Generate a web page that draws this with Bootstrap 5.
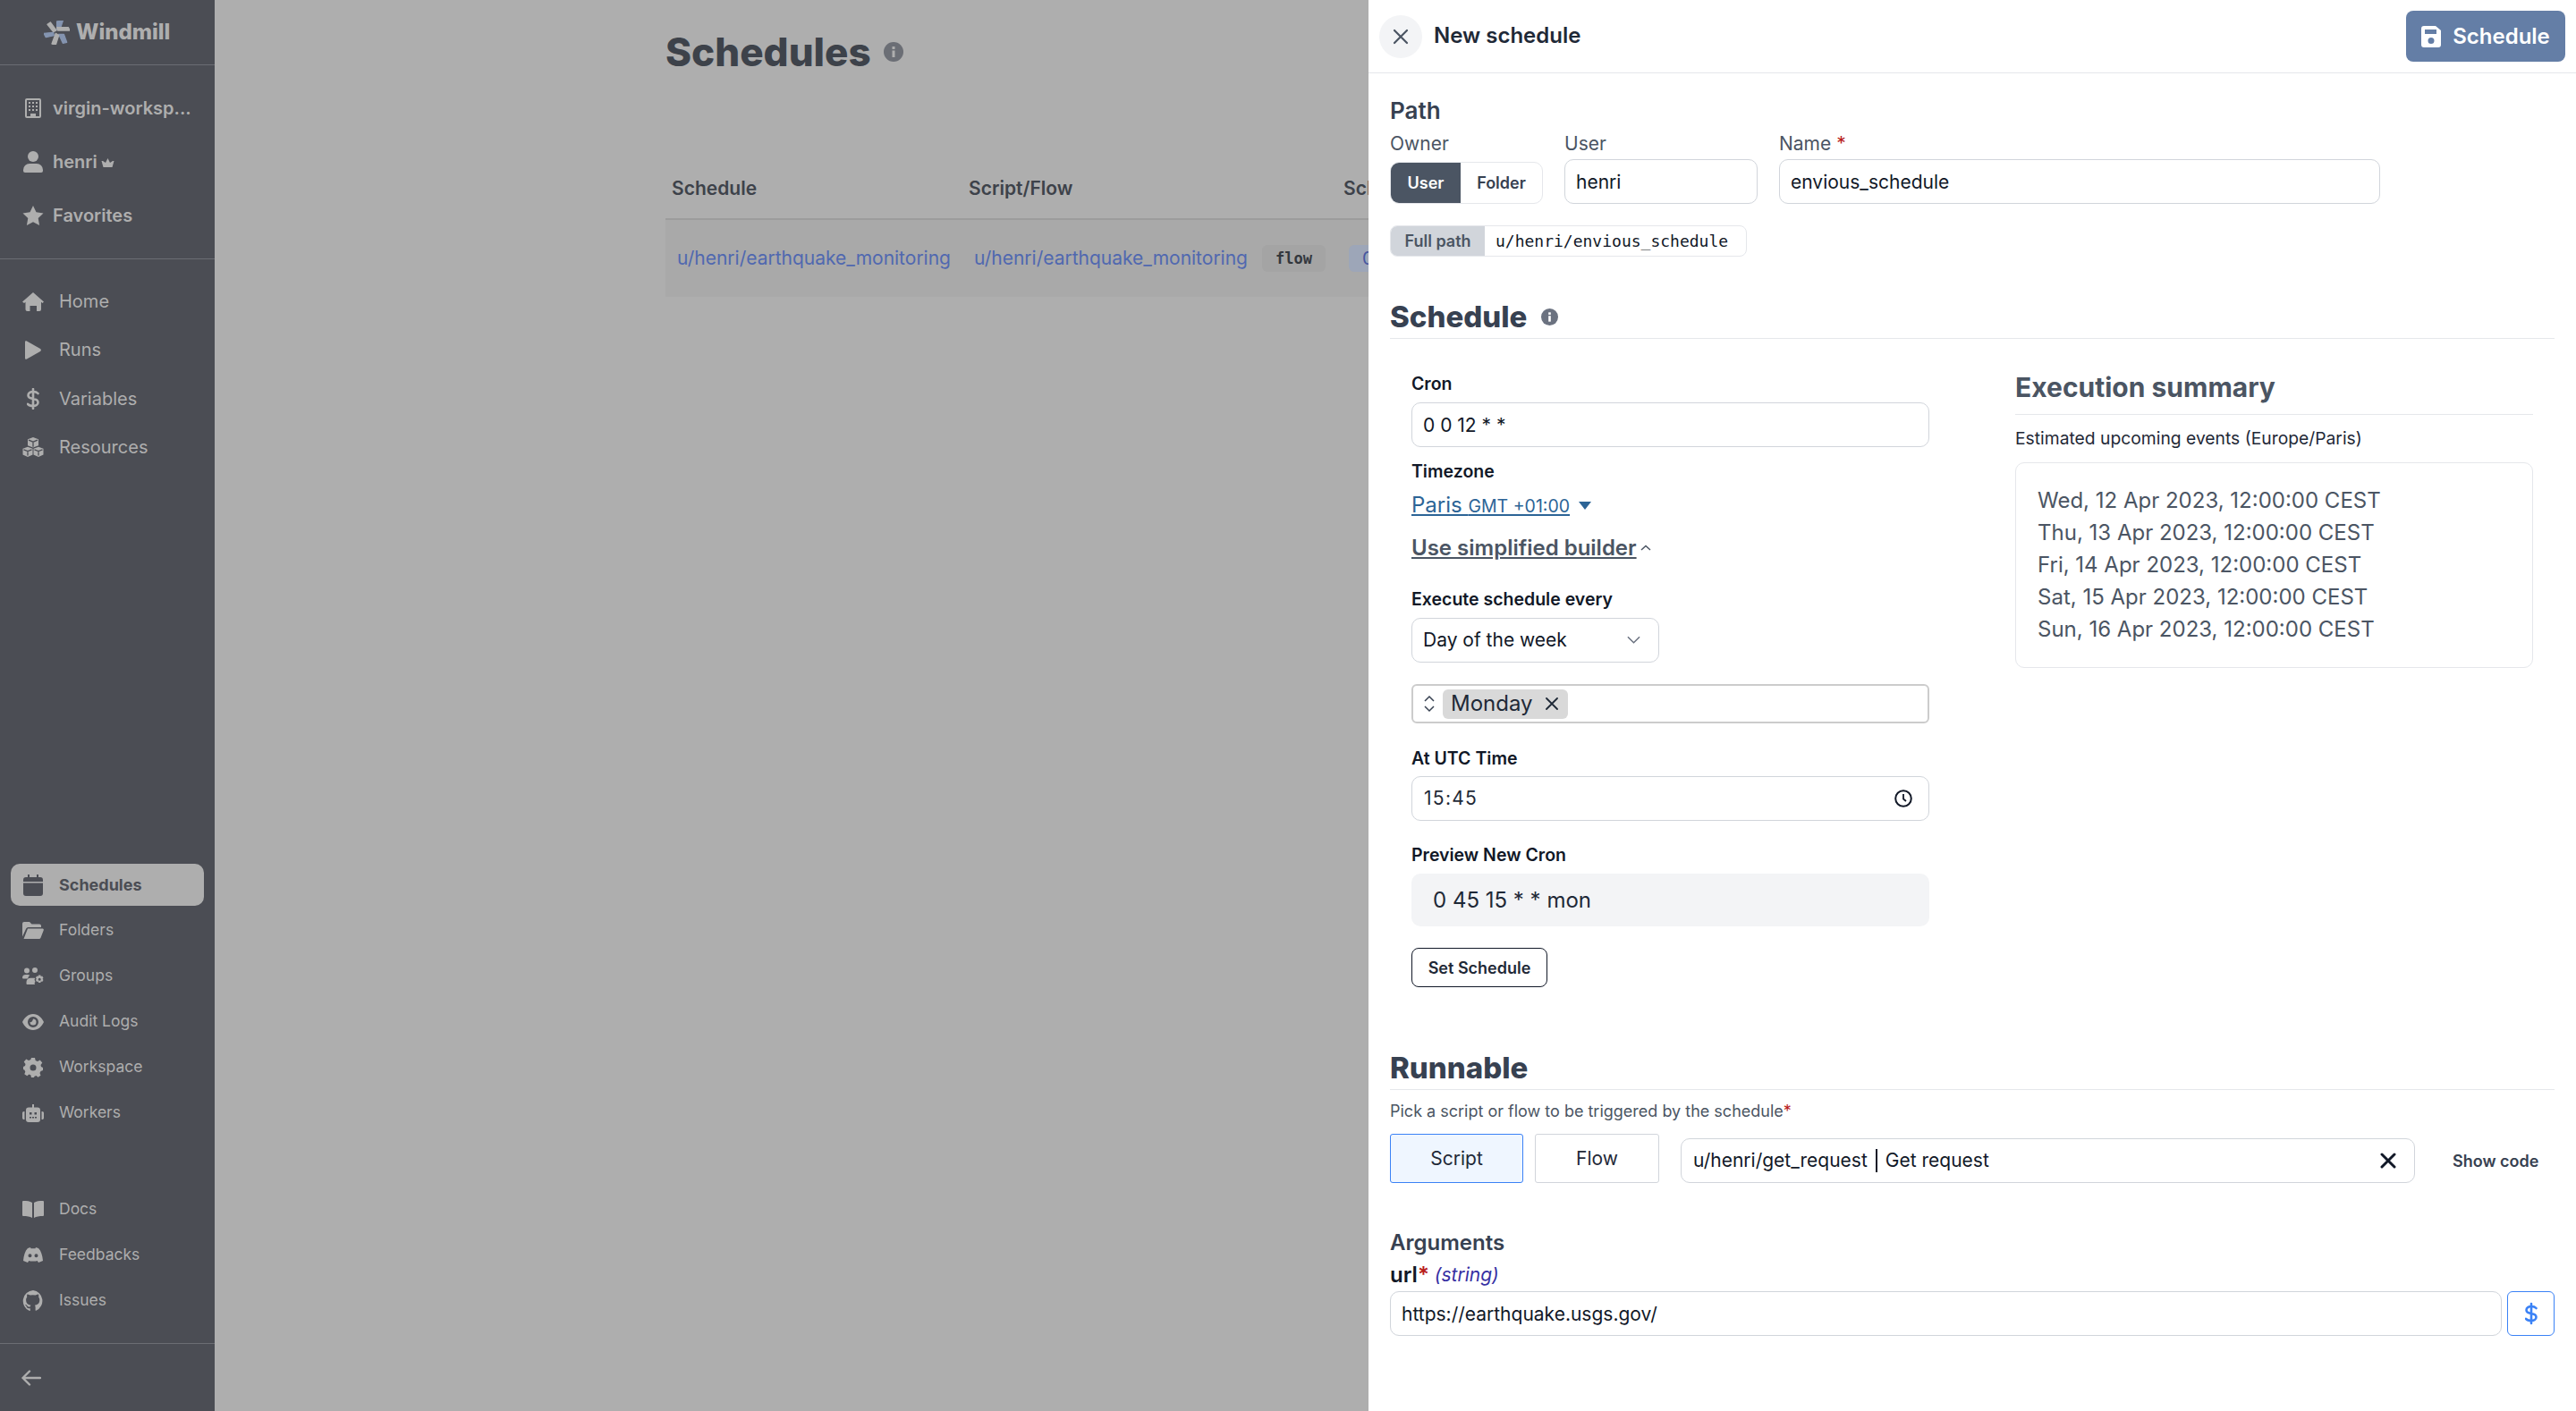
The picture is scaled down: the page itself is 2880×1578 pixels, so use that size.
<!DOCTYPE html>
<html lang="en">
<head>
<meta charset="UTF-8" />
<title>Schedules | Windmill</title>
<link rel="stylesheet" href="https://cdn.jsdelivr.net/npm/bootstrap@5.3.3/dist/css/bootstrap.min.css" />
<script src="https://cdn.jsdelivr.net/npm/bootstrap@5.3.3/dist/js/bootstrap.bundle.min.js"></script>
<style>
html, body { height: 100%; }
body { font-family: Inter, "Liberation Sans", sans-serif; background: #aeaeae; color: #111827; overflow: hidden; }
.app { width: 2880px; height: 1578px; }

/* sidebar */
.side { width: 240px; background: #4b4d54; color: #aeaeae; flex: none; }
.side svg { fill: currentColor; flex: none; }
.brand { height: 73px; border-bottom: 1px solid #6b6d73; font-size: 24px; font-weight: 800; padding-left: 49px; gap: 7px; }
.top-group { padding: 18px 0; border-bottom: 1px solid #6b6d73; }
.top-row { height: 60px; padding-left: 24px; gap: 9px; font-size: 20px; font-weight: 600; }
.crown { margin-left: -5px; margin-top: 3px; }
.main-group { padding-top: 20px; }
.main-row { height: 54.3px; padding-left: 24px; gap: 16px; font-size: 20px; }
.icon-cell { width: 26px; display: flex; justify-content: center; flex: none; }
.low-group { gap: 4px; padding: 0 12px; }
.low-docs { margin-top: 61px; }
.low-row { height: 47px; padding-left: 12px; gap: 16px; font-size: 17.5px; border-radius: 10px; }
.low-row.on { background: #aeaeae; color: #4b4d54; font-weight: 700; font-size: 18px; }
.side-foot { height: 76px; margin-top: 24px; border-top: 1px solid #6b6d73; padding-left: 24px; }

/* page behind the drawer */
.behind { width: 1290px; overflow: hidden; padding: 32px 0 0 504px; flex: none; }
.behind-title { font-size: 44px; font-weight: 800; color: #3d424a; line-height: 52px; margin: 0; gap: 14px; }
.sched-table { width: 1400px; table-layout: fixed; margin-top: 93px; font-size: 21px; }
.sched-table th { height: 68px; padding: 0 7px; font-weight: 600; color: #3d424a; border-bottom: 2px solid #9c9c9c; }
.sched-table td { height: 87px; padding: 0 13px; background: #a9a9a9; }
.sched-link { color: #5068b0; white-space: nowrap; }
.tag-flow { width: 71px; height: 30px; background: #a4a4a4; color: #33373d; font: 700 17px "DejaVu Sans Mono", monospace; border-radius: 6px; flex: none; }
.tag-cron { height: 30px; padding: 0 15px; background: #9da6b8; color: #4757a0; border-radius: 6px; font-size: 20px; white-space: nowrap; }
.flow-cell { gap: 16px; }

/* drawer */
.drawer { width: 1350px; background: #fff; flex: none; height: 1578px; }
.drawer-head { height: 82px; border-bottom: 1px solid #e5e7eb; padding: 0 12px; }
.close-btn { width: 48px; height: 48px; border-radius: 50%; background: #f3f4f6; }
.drawer-title { font-size: 24px; font-weight: 600; color: #1f2937; margin: 0 0 0 13px; }
.save-btn { width: 178px; height: 57px; background: #647ea6; color: #fff; font-size: 24px; font-weight: 600; border-radius: 8px; border: 0; gap: 13px; padding: 0; }
.save-btn:hover { background: #647ea6; color: #fff; }
.drawer-body { padding: 23px 24px 0; }

.path-title { font-size: 26px; font-weight: 600; color: #374151; line-height: 38px; }
.path-row { margin-top: 2px; gap: 24px; }
.field-lbl { font-size: 21px; line-height: 32px; color: #4b5563; height: 33px; }
.req { color: #b91c1c; }
.owner-group { width: 171px; height: 47px; margin-top: 3px; border: 1px solid #e5e7eb; border-radius: 10px; overflow: hidden; font-size: 18px; font-weight: 600; color: #374151; }
.owner-on { width: 78px; background: #4b5563; color: #fff; }
.owner-off { flex: 1; }
.fld { height: 50px; border: 1px solid #d1d5db; border-radius: 10px; font-size: 21px; color: #111827; padding: 0 12px; box-shadow: none; }
.fld-user { width: 216px; }
.fld-name { width: 672px; }
.fullpath { width: 399px; height: 35px; margin-top: 24px; border: 1px solid #e5e7eb; border-radius: 8px; overflow: hidden; }
.fullpath-lbl { width: 105px; background: #d1d5db; color: #4b5563; font-size: 18px; font-weight: 600; }
.fullpath-val { padding-left: 12px; font: 18px "DejaVu Sans Mono", monospace; color: #111827; }

.sec-title { font-size: 33px; font-weight: 800; color: #374151; line-height: 48px; border-bottom: 1px solid #e5e7eb; height: 49px; margin: 0; gap: 16px; }
.sec-schedule { margin-top: 43px; }
.sec-runnable { margin-top: 66px; }

.cron-cols { gap: 72px; }
.cron-left { width: 627px; padding: 36px 24px 0; }
.cron-right { width: 579px; padding-top: 32px; }
.b-lbl { font-size: 19.5px; font-weight: 600; line-height: 28px; color: #111827; }
.lbl-tz { margin-top: 13px; }
.lbl-every { margin-top: 26px; }
.lbl-time { margin-top: 25px; }
.lbl-preview { margin-top: 24px; }
.cron-fld { margin-top: 7px; }
.tz { font-size: 24px; line-height: 34px; color: #2c6496; margin-top: 7px; gap: 10px; }
.tz-link { color: #2c6496; }
.tz-link small { font-size: 19.5px; }
.builder { font-size: 24px; font-weight: 600; line-height: 34px; margin-top: 13px; color: #4b5563; gap: 4px; }
.builder-link { color: #4b5563; }
.day-select { width: 277px; height: 50px; margin-top: 7px; border: 1px solid #d1d5db; border-radius: 10px; font-size: 21px; color: #111827; padding: 0 12px; background-image: url("data:image/svg+xml,%3csvg xmlns='http://www.w3.org/2000/svg' viewBox='0 0 16 10'%3e%3cpath fill='none' stroke='%236b7280' stroke-width='1.600' d='M1 1l7 7 7-7'/%3e%3c/svg%3e"); background-position: right 20px center; background-size: 15px 10px; }
.multi { height: 44px; margin-top: 24px; border: 2px solid #ccc; border-radius: 6px; padding-left: 12px; gap: 9px; }
.chip { width: 140px; height: 33px; background: #d9d9d9; border-radius: 6px; font-size: 24px; padding: 0 11px 0 9px; color: #1f2937; justify-content: space-between; }
.time-fld { height: 50px; margin-top: 6px; border: 1px solid #d1d5db; border-radius: 10px; font-size: 21px; padding: 0 13px; letter-spacing: 1.300px; color: #1f2937; }
.clock { margin-right: 5px; }
.preview { height: 59px; margin-top: 7px; background: #f3f4f6; border-radius: 10px; font-size: 24px; padding-left: 24px; color: #1f2937; }
.set-btn { width: 152px; height: 44px; margin-top: 24px; border: 1px solid #111827; border-radius: 8px; background: #fff; font-size: 18px; font-weight: 600; color: #1f2937; padding: 0; }
.sum-title { font-size: 30px; font-weight: 700; line-height: 44px; color: #4b5563; padding-bottom: 8px; border-bottom: 1px solid #e5e7eb; }
.sum-note { font-size: 19.300px; line-height: 28px; margin-top: 12px; margin-bottom: 13px; color: #1f2937; }
.sum-box { height: 230px; border: 1px solid #e5e7eb; border-radius: 10px; padding: 24px; font-size: 24px; line-height: 36px; color: #4b5563; }

.pick-note { font-size: 18px; line-height: 28px; margin-top: 10px; color: #4b5563; }
.pick-row { margin-top: 11px; }
.kind-btn { height: 55px; border-radius: 3px; font-size: 21px; color: #1f2937; background: #fff; border: 1px solid #d1d5db; padding: 0; }
.kind-script { width: 149px; background: #eff6ff; border-color: #3b82f6; }
.kind-flow { width: 139px; margin-left: 13px; }
.pick-fld { width: 821px; height: 50px; margin: 5px 0 0 24px; border: 1px solid #d1d5db; border-radius: 10px; font-size: 21px; padding: 0 13px; color: #111827; }
.pick-sep { border-left: 2px solid #111827; height: 26px; margin: 0 9px; }
.close-x { margin-right: 7px; }
.show-code { margin: 5px 0 0 42px; font-size: 18px; font-weight: 600; color: #374151; }
.args-title { font-size: 24px; font-weight: 600; line-height: 32px; margin-top: 51px; color: #374151; }
.url-lbl { font-size: 24px; font-weight: 600; line-height: 28px; margin-top: 6px; color: #111827; gap: 6px; }
.url-type { font-size: 21px; font-weight: 400; font-style: italic; color: #3730a3; }
.url-row { margin-top: 4px; gap: 6px; }
.dollar { width: 53px; height: 50px; border: 1px solid #3b82f6; border-radius: 6px; color: #3b82f6; flex: none; }
</style>
</head>
<body>
<div class="app d-flex">
  <aside class="side d-flex flex-column">
    <div class="brand d-flex align-items-center">
      <svg width="29" height="27" viewBox="28 22 87 81" stroke-width="4" stroke-linejoin="round">
        <path d="M40 35 50 28 70 55 60 60Z" fill="#aeaeae" stroke="#aeaeae"/>
        <path d="M72 52 72 25 92 22 82 52Z" fill="#8494b0" stroke="#8494b0"/>
        <path d="M72 45H110L115 55 75 55Z" fill="#aeaeae" stroke="#aeaeae"/>
        <path d="M78 68H95L105 95 92 98Z" fill="#8494b0" stroke="#8494b0"/>
        <path d="M55 100 68 65 78 72 68 103Z" fill="#aeaeae" stroke="#aeaeae"/>
        <path d="M28 65 60 62 62 72 35 78Z" fill="#8494b0" stroke="#8494b0"/>
      </svg>
      <span>Windmill</span>
    </div>
    <div class="top-group">
      <div class="top-row d-flex align-items-center">
        <span class="icon-cell"><svg width="18" height="22" viewBox="0 0 18 22"><path fill-rule="evenodd" d="M2 0h14a2 2 0 0 1 2 2v18a2 2 0 0 1-2 2H2a2 2 0 0 1-2-2V2a2 2 0 0 1 2-2zm0 2v18h4v-3h6v3h4V2zm2 2h2v2H4zm4 0h2v2H8zm4 0h2v2h-2zM4 8h2v2H4zm4 0h2v2H8zm4 0h2v2h-2zM4 12h2v2H4zm4 0h2v2H8zm4 0h2v2h-2z"/></svg></span>
        <span>virgin-worksp...</span>
      </div>
      <div class="top-row d-flex align-items-center">
        <span class="icon-cell"><svg width="22" height="24" viewBox="0 0 22 24"><circle cx="11" cy="6" r="6"/><path d="M7 14h8a7 7 0 0 1 7 7v1a2 2 0 0 1-2 2H2a2 2 0 0 1-2-2v-1a7 7 0 0 1 7-7z"/></svg></span>
        <span>henri</span>
        <svg class="crown" width="15" height="13" viewBox="0 0 15 13"><path d="M7.500 1l2.500 5 3-2 1.500 0-2 7H2.500L.5 4 2 4l3 2z"/></svg>
      </div>
      <div class="top-row d-flex align-items-center">
        <span class="icon-cell"><svg width="24" height="22" viewBox="0 0 24 22"><path d="M12 0l3.500 7.300 8 1.100-5.800 5.600 1.400 8L12 18.200 4.900 22l1.400-8L.5 8.400l8-1.100z"/></svg></span>
        <span>Favorites</span>
      </div>
    </div>
    <div class="main-group">
      <div class="main-row d-flex align-items-center">
        <span class="icon-cell"><svg width="24" height="21" viewBox="0 0 24 21"><path d="M12 0l12 10.500-1.500 1.500-1.500-1.200V19a2 2 0 0 1-2 2h-3v-6H8.500v6h-3a2 2 0 0 1-2-2v-8.200L2 12 0 10.500z"/></svg></span>
        <span>Home</span>
      </div>
      <div class="main-row d-flex align-items-center">
        <span class="icon-cell"><svg width="18" height="21" viewBox="0 0 18 21"><path d="M0 1.500C0 .3 1 0 2 .5l15 8.500c1.200.7 1.200 2.300 0 3L2 20.500c-1 .5-2 .2-2-1z"/></svg></span>
        <span>Runs</span>
      </div>
      <div class="main-row d-flex align-items-center">
        <span class="icon-cell"><svg width="14" height="24" viewBox="0 0 14 24"><path fill="none" stroke="currentColor" stroke-width="2.600" stroke-linecap="round" d="M7 1v22M12.500 6C11 4.300 9 4 7 4 4 4 1.500 5.500 1.500 8s2.500 3.500 5.500 4 5.500 1.500 5.500 4-2.500 4-5.500 4c-2.200 0-4.500-.5-6-2.200"/></svg></span>
        <span>Variables</span>
      </div>
      <div class="main-row d-flex align-items-center">
        <span class="icon-cell"><svg width="24" height="22" viewBox="0 0 24 22"><path d="M12 0l6 2.300v7L12 11.600 6 9.300v-7zM6 10.700l5.500 2.100v6.800L6 22 .5 19.600v-6.800zM18 10.700l5.500 2.100v6.800L18 22l-5.500-2.400v-6.800z"/><path fill="none" stroke="#4b4d54" stroke-width="1.300" d="M7 3.200l5 2 5-2M12 5.200v5.500M1.500 13.800l4.500 1.800 4.500-1.800M6 15.600v5M13.500 13.800l4.500 1.800 4.500-1.800M18 15.600v5"/></svg></span>
        <span>Resources</span>
      </div>
    </div>
    <div class="low-group d-flex flex-column mt-auto">
      <div class="low-row on d-flex align-items-center">
        <span class="icon-cell"><svg width="22" height="24" viewBox="0 0 22 24"><path d="M5 0h2v3h8V0h2v3h2a3 3 0 0 1 3 3v2H0V6a3 3 0 0 1 3-3h2zM0 9.500h22V21a3 3 0 0 1-3 3H3a3 3 0 0 1-3-3z"/></svg></span>
        <span>Schedules</span>
      </div>
      <div class="low-row d-flex align-items-center">
        <span class="icon-cell"><svg width="24" height="19" viewBox="0 0 24 19"><path d="M0 2a2 2 0 0 1 2-2h6l2.500 2.500H19a2 2 0 0 1 2 2V6H6.500a2.500 2.500 0 0 0-2.300 1.500L0 16.500zM6 7.500h16.500c1 0 1.700 1 1.200 2L20.500 17.800a2 2 0 0 1-1.800 1.200H1.500z"/></svg></span>
        <span>Folders</span>
      </div>
      <div class="low-row d-flex align-items-center">
        <span class="icon-cell"><svg width="24" height="19" viewBox="0 0 24 19"><circle cx="5" cy="3.500" r="3"/><circle cx="14" cy="3" r="3"/><path d="M0 11.500C0 9 1.500 8 4 8h2c1 0 1.800.2 2.400.7C7 9.700 6.300 11 6.200 12.500H1a1 1 0 0 1-1-1z"/><path d="M4.500 16.500c0-3 2-4.700 4.800-4.700h3.400c.6 0 1.200.1 1.700.3l-.9 1.600 1 2-1 1.900.6 1.400H5.500a1 1 0 0 1-1-1z"/><path fill-rule="evenodd" d="M18 8.500h2.400l.4 1.500 1.400-.4 1.300 2.100-1 1.100 1 1.100-1.300 2.100-1.400-.4-.4 1.500H18l-.4-1.500-1.400.4-1.300-2.100 1-1.100-1-1.100 1.300-2.100 1.400.4zm1.200 3.300a1.500 1.500 0 1 0 0 3 1.500 1.500 0 0 0 0-3z"/></svg></span>
        <span>Groups</span>
      </div>
      <div class="low-row d-flex align-items-center">
        <span class="icon-cell"><svg width="24" height="18" viewBox="0 0 24 18"><path fill-rule="evenodd" d="M12 0c5.500 0 9.800 4 12 9-2.200 5-6.500 9-12 9S2.200 14 0 9c2.200-5 6.500-9 12-9zm0 3a6 6 0 1 0 0 12 6 6 0 0 0 0-12zm0 2.500a3.500 3.500 0 1 1-3.500 3.500c.6.300 2.800.4 3.500-3.500z"/></svg></span>
        <span>Audit Logs</span>
      </div>
      <div class="low-row d-flex align-items-center">
        <span class="icon-cell"><svg width="22" height="22" viewBox="0 0 22 22"><path fill-rule="evenodd" d="M9 0h4l.7 3 2.300 1 2.700-1.500 2.600 3-1.800 2.500.5 2 2 1v3l-2.500 1-1 2 1 2.700-3 2-2-1.700-2 .7L12 22H9l-.7-2.800-2-.7-2 1.700-3-2 1-2.700-1-2L0 13v-3l2-1 .5-2L.7 4.500l2.600-3L6 3l2.300-1zm2 7.500a3.500 3.500 0 1 0 0 7 3.500 3.500 0 0 0 0-7z"/></svg></span>
        <span>Workspace</span>
      </div>
      <div class="low-row d-flex align-items-center">
        <span class="icon-cell"><svg width="24" height="20" viewBox="0 0 24 20"><path fill-rule="evenodd" d="M11 0h2v3.500h4a3 3 0 0 1 3 3V17a3 3 0 0 1-3 3H7a3 3 0 0 1-3-3V6.500a3 3 0 0 1 3-3h4zM8 9v2.500h2.500V9zm5.500 0v2.500H16V9zM8 14v1.500h2V14zm3 0v1.500h2V14zm3 0v1.500h2V14zM0 10a2 2 0 0 1 2.500-2v9A2 2 0 0 1 0 15zm24 0a2 2 0 0 0-2.500-2v9a2 2 0 0 0 2.500-2z"/></svg></span>
        <span>Workers</span>
      </div>
    </div>
    <div class="low-group low-docs d-flex flex-column">
      <div class="low-row d-flex align-items-center">
        <span class="icon-cell"><svg width="24" height="19" viewBox="0 0 24 19"><path d="M1 0c4 0 7.500.3 10 2v17c-2.500-1.500-6-2-10-2a1 1 0 0 1-1-1V1a1 1 0 0 1 1-1zM23 0c-4 0-7.500.3-10 2v17c2.500-1.500 6-2 10-2a1 1 0 0 0 1-1V1a1 1 0 0 0-1-1z"/></svg></span>
        <span>Docs</span>
      </div>
      <div class="low-row d-flex align-items-center">
        <span class="icon-cell"><svg width="22" height="17" viewBox="0 0 22 17"><path fill-rule="evenodd" d="M5 1l3-1 .5 1.200h5L14 0l3 1c3 3 4.500 8 5 14l-5 2-1.300-2c-1.500.8-8 .8-9.400 0L5 17l-5-2C.500 9 2 4 5 1zm2.500 6.200a2 2 0 1 0 0 4 2 2 0 0 0 0-4zm7 0a2 2 0 1 0 0 4 2 2 0 0 0 0-4z"/></svg></span>
        <span>Feedbacks</span>
      </div>
      <div class="low-row d-flex align-items-center">
        <span class="icon-cell"><svg width="24" height="23" viewBox="0 0 24 23"><path fill-rule="evenodd" d="M12 0a12 12 0 0 0-4 23c.6.100.8-.300.800-.600v-2.200C5.500 21 4.800 18.500 4.800 18.500c-.5-1.300-1.300-1.700-1.300-1.700-1-.7.100-.7.100-.7 1.200.1 1.800 1.200 1.800 1.200 1 1.800 2.800 1.300 3.400 1 .1-.8.400-1.300.8-1.600-2.700-.3-5.500-1.300-5.500-5.900 0-1.300.5-2.400 1.200-3.200-.1-.3-.5-1.500.1-3.200 0 0 1-.3 3.300 1.200a11.500 11.500 0 0 1 6 0c2.300-1.500 3.300-1.200 3.300-1.200.6 1.700.2 2.900.1 3.200.8.800 1.200 1.900 1.200 3.200 0 4.600-2.800 5.600-5.500 5.900.4.400.8 1.100.8 2.200v3.300c0 .3.200.7.800.6A12 12 0 0 0 12 0z"/></svg></span>
        <span>Issues</span>
      </div>
    </div>
    <div class="side-foot d-flex align-items-center">
      <svg width="22" height="18" viewBox="0 0 22 18"><path fill="none" stroke="currentColor" stroke-width="2.400" stroke-linecap="round" stroke-linejoin="round" d="M1.500 9H21M9 1.500 1.500 9 9 16.500"/></svg>
    </div>
  </aside>

  <main class="behind">
    <h1 class="behind-title d-flex align-items-center">Schedules
      <svg width="22" height="22" viewBox="0 0 22 22"><circle cx="11" cy="11" r="11" fill="#6b6e75"/><rect x="9.500" y="9.500" width="3" height="7.500" fill="#aeaeae"/><rect x="9.500" y="5" width="3" height="3" fill="#aeaeae"/></svg>
    </h1>
    <table class="sched-table">
      <colgroup><col style="width:332px"><col style="width:419px"><col></colgroup>
      <thead><tr><th>Schedule</th><th>Script/Flow</th><th>Schedule</th></tr></thead>
      <tbody><tr>
        <td><a class="sched-link text-decoration-none" href="#">u/henri/earthquake_monitoring</a></td>
        <td><div class="flow-cell d-flex align-items-center"><a class="sched-link text-decoration-none" href="#">u/henri/earthquake_monitoring</a><span class="tag-flow d-flex align-items-center justify-content-center">flow</span></div></td>
        <td><span class="tag-cron d-inline-flex align-items-center">0 0 12 * *</span></td>
      </tr></tbody>
    </table>
  </main>

  <section class="drawer">
    <header class="drawer-head d-flex align-items-center">
      <span class="close-btn d-flex align-items-center justify-content-center">
        <svg width="18" height="18" viewBox="0 0 18 18"><path stroke="#4b5563" stroke-width="2.200" stroke-linecap="round" d="M2 2l14 14M16 2 2 16"/></svg>
      </span>
      <h2 class="drawer-title">New schedule</h2>
      <button class="btn save-btn ms-auto d-flex align-items-center justify-content-center" type="button">
        <svg width="22" height="24" viewBox="0 0 22 24"><path fill="#fff" fill-rule="evenodd" d="M3 0h13l6 5v16a3 3 0 0 1-3 3H3a3 3 0 0 1-3-3V3a3 3 0 0 1 3-3zm1 4v5h13V4zm7 9a3.500 3.500 0 1 0 0 7 3.500 3.500 0 0 0 0-7z"/></svg>
        Schedule
      </button>
    </header>

    <div class="drawer-body">
      <div class="path-title">Path</div>
      <div class="path-row d-flex">
        <div>
          <div class="field-lbl">Owner</div>
          <div class="owner-group d-flex">
            <span class="owner-on d-flex align-items-center justify-content-center">User</span>
            <span class="owner-off d-flex align-items-center justify-content-center">Folder</span>
          </div>
        </div>
        <div>
          <div class="field-lbl">User</div>
          <input class="form-control fld fld-user" value="henri" />
        </div>
        <div>
          <div class="field-lbl">Name <span class="req">*</span></div>
          <input class="form-control fld fld-name" value="envious_schedule" />
        </div>
      </div>
      <div class="fullpath d-flex">
        <span class="fullpath-lbl d-flex align-items-center justify-content-center">Full path</span>
        <span class="fullpath-val d-flex align-items-center">u/henri/envious_schedule</span>
      </div>

      <h3 class="sec-title sec-schedule d-flex align-items-center">Schedule
        <svg width="19" height="21" viewBox="0 0 22 22"><circle cx="11" cy="11" r="11" fill="#6b7280"/><rect x="9.500" y="9.500" width="3" height="7.500" fill="#fff"/><rect x="9.500" y="5" width="3" height="3" fill="#fff"/></svg>
      </h3>
      <div class="cron-cols d-flex">
        <div class="cron-left">
          <div class="b-lbl">Cron</div>
          <input class="form-control fld cron-fld" value="0 0 12 * *" />
          <div class="b-lbl lbl-tz">Timezone</div>
          <div class="tz d-flex align-items-center">
            <a class="tz-link" href="#">Paris <small>GMT +01:00</small></a>
            <svg width="14" height="9" viewBox="0 0 14 9"><path d="M0 0h14L7 9z" fill="#2c6496"/></svg>
          </div>
          <div class="builder d-flex align-items-center">
            <a class="builder-link" href="#">Use simplified builder</a>
            <svg width="12" height="8" viewBox="0 0 12 8"><path d="M1 6l5-4.500L11 6" fill="none" stroke="#4b5563" stroke-width="1.500"/></svg>
          </div>
          <div class="b-lbl lbl-every">Execute schedule every</div>
          <select class="form-select day-select"><option>Day of the week</option></select>
          <div class="multi d-flex align-items-center">
            <svg width="12" height="20" viewBox="0 0 12 20"><path d="M1 7l5-5 5 5M1 13l5 5 5-5" fill="none" stroke="#374151" stroke-width="1.500"/></svg>
            <span class="chip d-flex align-items-center">Monday
              <svg width="14" height="14" viewBox="0 0 14 14"><path stroke="#1f2937" stroke-width="1.800" stroke-linecap="round" d="M1 1l12 12M13 1 1 13"/></svg>
            </span>
          </div>
          <div class="b-lbl lbl-time">At UTC Time</div>
          <div class="time-fld form-control d-flex align-items-center justify-content-between">15:45
            <svg class="clock" width="20" height="20" viewBox="0 0 20 20"><circle cx="10" cy="10" r="8.800" fill="none" stroke="#111827" stroke-width="2"/><path d="M10 5v5.500l3 2.500" fill="none" stroke="#111827" stroke-width="1.800"/></svg>
          </div>
          <div class="b-lbl lbl-preview">Preview New Cron</div>
          <div class="preview d-flex align-items-center">0 45 15 * * mon</div>
          <button class="btn set-btn d-block" type="button">Set Schedule</button>
        </div>
        <div class="cron-right">
          <div class="sum-title">Execution summary</div>
          <div class="sum-note">Estimated upcoming events (Europe/Paris)</div>
          <div class="sum-box">
            <div>Wed, 12 Apr 2023, 12:00:00 CEST</div>
            <div>Thu, 13 Apr 2023, 12:00:00 CEST</div>
            <div>Fri, 14 Apr 2023, 12:00:00 CEST</div>
            <div>Sat, 15 Apr 2023, 12:00:00 CEST</div>
            <div>Sun, 16 Apr 2023, 12:00:00 CEST</div>
          </div>
        </div>
      </div>

      <h3 class="sec-title sec-runnable">Runnable</h3>
      <div class="pick-note">Pick a script or flow to be triggered by the schedule<span class="req">*</span></div>
      <div class="pick-row d-flex align-items-start">
        <button class="btn kind-btn kind-script" type="button">Script</button>
        <button class="btn kind-btn kind-flow" type="button">Flow</button>
        <div class="pick-fld d-flex align-items-center">u/henri/get_request<span class="pick-sep"></span>Get request
          <svg class="ms-auto close-x" width="18" height="18" viewBox="0 0 18 18"><path stroke="#111827" stroke-width="3" stroke-linecap="round" d="M2 2l14 14M16 2 2 16"/></svg>
        </div>
        <div class="show-code align-self-center">Show code</div>
      </div>
      <div class="args-title">Arguments</div>
      <div class="url-lbl d-flex align-items-center"><span>url<span class="req">*</span></span><span class="url-type">(string)</span></div>
      <div class="url-row d-flex">
        <input class="form-control fld" value="https://earthquake.usgs.gov/" />
        <span class="dollar d-flex align-items-center justify-content-center">
          <svg width="14" height="26" viewBox="0 0 14 24"><path fill="none" stroke="currentColor" stroke-width="2.600" stroke-linecap="round" d="M7 1v22M12.500 6C11 4.300 9 4 7 4 4 4 1.500 5.500 1.500 8s2.500 3.500 5.500 4 5.500 1.500 5.500 4-2.500 4-5.500 4c-2.200 0-4.500-.5-6-2.200"/></svg>
        </span>
      </div>
    </div>
  </section>
</div>
</body>
</html>
